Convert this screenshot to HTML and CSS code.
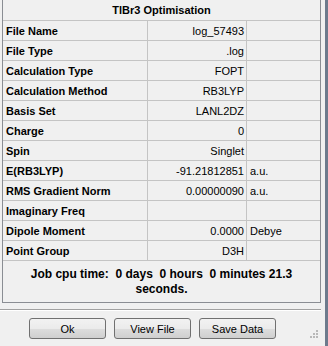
FILE: index.html
```html
<!DOCTYPE html>
<html lang="en">
<head>
  <meta charset="UTF-8">
  <title>TlBr3 Optimisation</title>
  <link rel="stylesheet" href="styles.css">
</head>
<body>
  <div class="window">
    <div class="panel">
      <table class="summary">
        <colgroup>
          <col class="col-label">
          <col class="col-value">
          <col class="col-unit">
        </colgroup>
        <tr><th colspan="3">TlBr3 Optimisation</th></tr>
        <tr><td class="label">File Name</td><td class="value">log_57493</td><td class="unit"></td></tr>
        <tr><td class="label">File Type</td><td class="value">.log</td><td class="unit"></td></tr>
        <tr><td class="label">Calculation Type</td><td class="value">FOPT</td><td class="unit"></td></tr>
        <tr><td class="label">Calculation Method</td><td class="value">RB3LYP</td><td class="unit"></td></tr>
        <tr><td class="label">Basis Set</td><td class="value">LANL2DZ</td><td class="unit"></td></tr>
        <tr><td class="label">Charge</td><td class="value">0</td><td class="unit"></td></tr>
        <tr><td class="label">Spin</td><td class="value">Singlet</td><td class="unit"></td></tr>
        <tr><td class="label">E(RB3LYP)</td><td class="value">-91.21812851</td><td class="unit">a.u.</td></tr>
        <tr><td class="label">RMS Gradient Norm</td><td class="value">0.00000090</td><td class="unit">a.u.</td></tr>
        <tr><td class="label">Imaginary Freq</td><td class="value"></td><td class="unit"></td></tr>
        <tr><td class="label">Dipole Moment</td><td class="value">0.0000</td><td class="unit">Debye</td></tr>
        <tr><td class="label">Point Group</td><td class="value">D3H</td><td class="unit"></td></tr>
      </table>
      <p class="cpu-time">Job cpu time:&nbsp; 0 days&nbsp; 0 hours&nbsp; 0 minutes 21.3<br>seconds.</p>
    </div>

    <div class="separator"></div>

    <div class="buttons">
      <button class="btn">Ok</button>
      <button class="btn">View File</button>
      <button class="btn">Save Data</button>
    </div>

    <svg class="grip" width="8" height="8" viewBox="0 0 8 8">
      <rect x="6" y="0" width="2" height="2" fill="#b8b8b8"/>
      <rect x="3" y="3" width="2" height="2" fill="#b8b8b8"/>
      <rect x="6" y="3" width="2" height="2" fill="#b8b8b8"/>
      <rect x="0" y="6" width="2" height="2" fill="#b8b8b8"/>
      <rect x="3" y="6" width="2" height="2" fill="#b8b8b8"/>
      <rect x="6" y="6" width="2" height="2" fill="#b8b8b8"/>
    </svg>
  </div>
</body>
</html>
```

FILE: styles.css
```css
html, body {
  margin: 0;
  height: 100%;
}
body {
  font-family: "Liberation Sans", Arial, sans-serif;
  font-size: 11px;
  color: #000;
  background: #f0f0f0;
}
.window {
  position: relative;
  box-sizing: border-box;
  width: 328px;
  height: 346px;
  border-right: 3px solid #6d7a8c;
}
.panel {
  margin-left: 2px;
  width: 317px;
  border: 1px solid #8a8d93;
  border-top: none;
}
.summary {
  width: 317px;
  table-layout: fixed;
  border-collapse: separate;
  border-spacing: 0;
}
.col-label { width: 145px; }
.col-value { width: 99px; }
.col-unit { width: 73px; }
.summary th {
  height: 20px;
  padding: 0;
  font-weight: bold;
  text-align: center;
  border-bottom: 1px solid #c4c4c4;
}
.summary td {
  height: 19px;
  padding: 0;
  border-bottom: 1px solid #c4c4c4;
  white-space: nowrap;
  overflow: hidden;
}
.label {
  padding-left: 3px !important;
  font-weight: bold;
  border-right: 1px solid #c4c4c4;
}
.value {
  padding-right: 2px !important;
  text-align: right;
  border-right: 1px solid #c4c4c4;
}
.unit {
  padding-left: 3px !important;
}
.cpu-time {
  margin: 0;
  padding: 6px 0 5px;
  height: 30px;
  font-size: 12px;
  line-height: 15px;
  font-weight: bold;
  text-align: center;
}
.separator {
  margin-top: 6px;
  width: 321px;
  border-top: 1px solid #a0a0a0;
  border-bottom: 1px solid #ffffff;
}
.buttons {
  display: flex;
  gap: 8px;
  padding-left: 29px;
  margin-top: 7px;
}
.btn {
  width: 77px;
  height: 21px;
  padding: 0;
  font-family: inherit;
  font-size: 11px;
  color: #000;
  border: 1px solid #707070;
  border-radius: 3px;
  background: linear-gradient(#f2f2f2 0%, #ebebeb 50%, #dddddd 51%, #cfcfcf 100%);
}
.grip {
  position: absolute;
  right: 7px;
  bottom: 8px;
}
```
